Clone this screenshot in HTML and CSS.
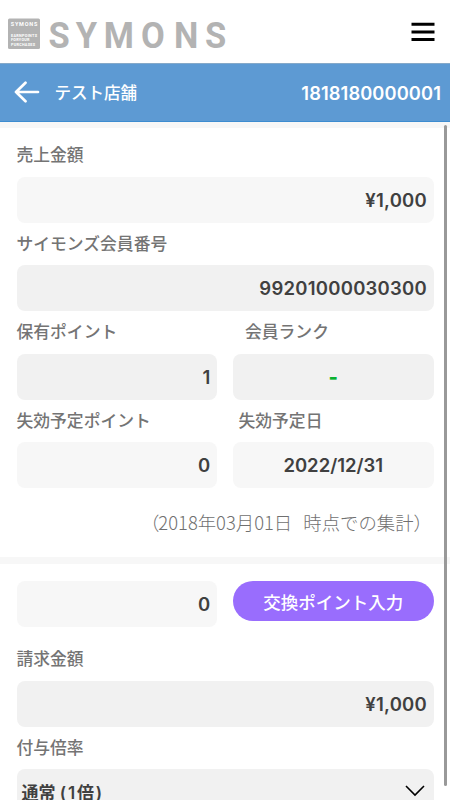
FILE: index.html
```
<!DOCTYPE html>
<html lang="ja">
<head>
<meta charset="utf-8">
<title>SYMONS</title>
<link rel="stylesheet" href="styles.css">
</head>
<body>
<header class="top">
  <svg class="logo" width="240" height="63" viewBox="0 0 240 63" role="img" aria-label="SYMONS">
    <rect x="8" y="18.500" width="32" height="30.500" rx="1.500"/>
    <g class="logo-small">
      <text x="10.800" y="26" font-size="5.500" textLength="26.500">SYMONS</text>
      <text x="11" y="36.600" font-size="3.800" textLength="26">EARNPOINTS</text>
      <text x="11" y="41.200" font-size="3.800" textLength="18.500">FORYOUR</text>
      <text x="11" y="46" font-size="3.800" textLength="24">PURCHASES</text>
    </g>
    <g class="logo-name" transform="scale(.92 1)">
      <text x="52.800 82.400 112.900 153.300 189 222.700" y="48.300">SYMONS</text>
    </g>
  </svg>
  <svg class="menu" width="24" height="20" viewBox="0 0 24 20"><path d="M.5 2.200h23M.5 10h23M.5 17.500h23"/></svg>
</header>
<div class="bar">
  <svg class="back" width="26" height="22" viewBox="0 0 26 22"><path d="M24 11H2M11.500 1.800 2 11l9.500 9.200"/></svg>
  <span class="shop">テスト店舗</span>
  <span class="shop-id">1818180000001</span>
</div>
<main>
  <section class="summary">
    <div class="group"><div class="label">売上金額</div><div class="field pale">¥1,000</div></div>
    <div class="group"><div class="label">サイモンズ会員番号</div><div class="field">99201000030300</div></div>
    <div class="pair">
      <div class="group"><div class="label">保有ポイント</div><div class="field">1</div></div>
      <div class="group"><div class="label rank-label">会員ランク</div><div class="field center rank">-</div></div>
    </div>
    <div class="pair">
      <div class="group"><div class="label">失効予定ポイント</div><div class="field pale">0</div></div>
      <div class="group"><div class="label date-label">失効予定日</div><div class="field pale center date">2022/12/31</div></div>
    </div>
    <p class="note"><span><span class="open">（</span>2018年03月01日</span><span>時点での集計）</span></p>
  </section>
  <section class="billing">
    <div class="pair exchange">
      <div class="field pale">0</div>
      <button class="button" type="button">交換ポイント入力</button>
    </div>
    <div class="group"><div class="label">請求金額</div><div class="field">¥1,000</div></div>
    <div class="group"><div class="label">付与倍率</div>
      <div class="field select"><span>通常 <span class="rate">(1倍)</span></span><svg width="20" height="12" viewBox="0 0 20 12"><path d="m1 1 9 9 9-9"/></svg></div>
    </div>
  </section>
</main>
<div class="scrollbar"></div>
</body>
</html>
```
FILE: styles.css
```
* { box-sizing: border-box; }
body {
  margin: 0;
  height: 800px;
  overflow: hidden;
  position: relative;
  display: flex;
  flex-direction: column;
  background: #fff;
  color: #404040;
  font-family: Inter, "Noto Sans CJK JP", sans-serif;
}
.top {
  height: 63px;
  flex: none;
  display: flex;
  align-items: center;
  justify-content: space-between;
  padding-right: 15px;
}
.logo { fill: #b3b3b3; }
.logo-small { fill: #fff; font-family: Roboto, sans-serif; font-weight: 700; }
.logo-name { font-family: Roboto, sans-serif; font-size: 37.5px; font-weight: 700; }
.menu { fill: none; stroke: #000; stroke-width: 3; }
.bar {
  height: 59px;
  flex: none;
  display: flex;
  align-items: center;
  padding: 0 9px 2px 14px;
  background: #5d9ad3;
  border-top: 1px solid #85a9c9;
  border-bottom: 1px solid #3d8cd0;
  color: #fff;
}
.back {
  fill: none;
  stroke: #fff;
  stroke-width: 2.7;
  stroke-linecap: round;
  stroke-linejoin: round;
}
.shop { margin-left: 14.5px; font-size: 16.5px; font-weight: 500; }
.shop-id { margin: 2px 0 0 auto; font-size: 18.3px; font-weight: 600; letter-spacing: .1px; }
main { flex: 1; min-height: 0; overflow: hidden; }
.summary { border-top: 6.5px solid #f7f7f7; padding: 6px 16.5px 0; }
.billing { border-top: 7px solid #f7f7f7; padding: 17px 16.5px 0; }
.label {
  height: 42.5px;
  line-height: 43px;
  color: #747474;
  font-size: 16.8px;
  font-weight: 500;
  white-space: nowrap;
}
.field {
  height: 46px;
  display: flex;
  align-items: center;
  justify-content: flex-end;
  padding: 0 6.5px;
  border-radius: 8px;
  background: #f1f1f1;
  font-size: 18.5px;
  font-weight: 600;
  letter-spacing: .25px;
}
.pale { background: #f7f7f7; }
.center { justify-content: center; }
.date { letter-spacing: 0; }
.rank { color: #0ab22f; font-size: 20px; font-weight: 800; }
.rank-label { padding-left: 12px; }
.date-label { padding-left: 5.5px; }
.pair { display: grid; grid-template-columns: 1fr 1fr; column-gap: 16px; }
.note {
  height: 69px;
  margin: 0;
  padding: 0 1.5px 2px 0;
  display: flex;
  justify-content: flex-end;
  align-items: center;
  gap: 11px;
  color: #707070;
  font-family: "Noto Sans CJK JP", sans-serif;
  font-size: 18.4px;
  font-weight: 300;
  white-space: nowrap;
}
.open { letter-spacing: -1px; }
.exchange { margin-bottom: 11px; }
.button {
  height: 40px;
  padding: 0;
  border: 0;
  border-radius: 20px;
  background: #996dfd;
  color: #fff;
  font-family: "Noto Sans CJK JP", sans-serif;
  font-size: 17.5px;
  font-weight: 500;
}
.select { justify-content: space-between; padding: 0 9px 2px 5px; font-size: 17px; letter-spacing: 0; }
.rate { letter-spacing: 1.8px; }
.select svg { fill: none; stroke: #000; stroke-width: 1.6; }
.scrollbar {
  position: absolute;
  top: 125px;
  right: 3px;
  width: 3px;
  height: 661px;
  border-radius: 2px;
  background: #999;
}
```
